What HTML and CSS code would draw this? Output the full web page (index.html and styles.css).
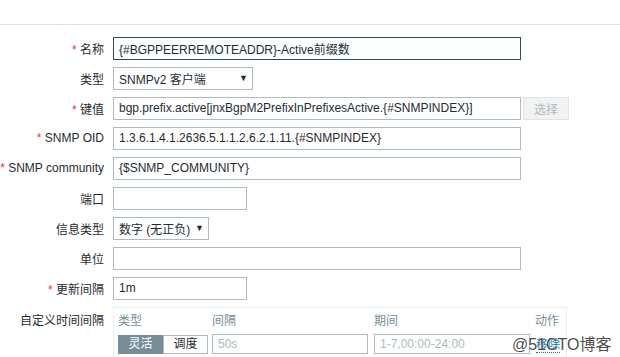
FILE: index.html
```html
<!DOCTYPE html>
<html lang="zh-CN">
<head>
  <meta charset="UTF-8" />
  <meta name="viewport" content="width=device-width, initial-scale=1.0"/>
  <title>监控项</title>
  <link rel="stylesheet" href="styles.css">
</head>
<body>
  <div class="page">
    <form class="form-list">
      <div class="row">
        <label class="lbl"><span class="req">*</span> 名称</label>
        <div class="field"><input type="text" class="inp wide focus" value="{#BGPPEERREMOTEADDR}-Active前缀数"></div>
      </div>
      <div class="row">
        <label class="lbl">类型</label>
        <div class="field"><div class="select sel-type">SNMPv2 客户端<span class="arrow">▼</span></div></div>
      </div>
      <div class="row">
        <label class="lbl"><span class="req">*</span> 键值</label>
        <div class="field">
          <input type="text" class="inp wide" value="bgp.prefix.active[jnxBgpM2PrefixInPrefixesActive.{#SNMPINDEX}]">
          <button type="button" class="btn-alt" disabled>选择</button>
        </div>
      </div>
      <div class="row">
        <label class="lbl"><span class="req">*</span> SNMP OID</label>
        <div class="field"><input type="text" class="inp wide" value="1.3.6.1.4.1.2636.5.1.1.2.6.2.1.11.{#SNMPINDEX}"></div>
      </div>
      <div class="row">
        <label class="lbl"><span class="req">*</span> SNMP community</label>
        <div class="field"><input type="text" class="inp wide" value="{$SNMP_COMMUNITY}"></div>
      </div>
      <div class="row">
        <label class="lbl">端口</label>
        <div class="field"><input type="text" class="inp short" value=""></div>
      </div>
      <div class="row">
        <label class="lbl">信息类型</label>
        <div class="field"><div class="select sel-info">数字 (无正负)<span class="arrow">▼</span></div></div>
      </div>
      <div class="row">
        <label class="lbl">单位</label>
        <div class="field"><input type="text" class="inp wide" value=""></div>
      </div>
      <div class="row">
        <label class="lbl"><span class="req">*</span> 更新间隔</label>
        <div class="field"><input type="text" class="inp short" value="1m"></div>
      </div>
      <div class="row row-top">
        <label class="lbl">自定义时间间隔</label>
        <div class="field">
          <div class="intervals">
            <div class="int-head">
              <span>类型</span>
              <span>间隔</span>
              <span>期间</span>
              <span class="act">动作</span>
            </div>
            <div class="int-row">
              <div class="seg">
                <span class="seg-btn on">灵活</span>
                <span class="seg-btn">调度</span>
              </div>
              <input type="text" class="inp mid" placeholder="50s">
              <input type="text" class="inp mid" placeholder="1-7,00:00-24:00">
              <a class="link" href="#">移除</a>
            </div>
          </div>
        </div>
      </div>
    </form>
    <div class="watermark">@51CTO博客</div>
  </div>
</body>
</html>
```

FILE: styles.css
```css
* {
  box-sizing: border-box;
}

body {
  margin: 0;
  background: #fff;
  color: #1f2c33;
  font-family: "Liberation Sans", Arial, "Noto Sans CJK SC", sans-serif;
  font-size: 12px;
  overflow: hidden;
}

.page {
  position: relative;
  height: 357px;
  padding-top: 24px;
}

.form-list {
  border-top: 1px solid #e3e3e3;
  padding-top: 8px;
  margin: 0;
}

.row {
  display: grid;
  grid-template-columns: 104px 1fr;
  column-gap: 9px;
  align-items: center;
  height: 30px;
}

.row-top {
  align-items: start;
  height: auto;
}

.row-top .lbl {
  padding-top: 8px;
}

.lbl {
  text-align: right;
  white-space: nowrap;
}

.req {
  color: #e33734;
}

.field {
  display: flex;
  align-items: center;
  gap: 2px;
}

.inp {
  height: 23px;
  border: 1px solid #acbbc2;
  background: #fff;
  color: #1f2c33;
  font: inherit;
  padding: 0 5px;
  outline: none;
}

.inp::placeholder {
  color: #acbbc2;
}

.focus {
  border-color: #2f4f5f;
  background: #fbfffd;
}

.wide {
  width: 408px;
}

.short {
  width: 134px;
}

.mid {
  width: 156px;
  height: 20px;
}

.select {
  display: flex;
  align-items: center;
  justify-content: space-between;
  height: 23px;
  border: 1px solid #acbbc2;
  padding: 0 4px 0 5px;
  background: #fff;
}

.sel-type {
  width: 140px;
}

.sel-info {
  width: 96px;
}

.arrow {
  font-size: 9px;
  color: #1f2c33;
}

.btn-alt {
  width: 46px;
  height: 23px;
  border: 1px solid #dfe4e7;
  background: #f2f2f2;
  color: #acbbc2;
  font: inherit;
}

.intervals {
  width: 454px;
  margin-top: 4px;
  border: 1px solid #ebeef0;
  border-bottom: none;
  padding: 4px 4px 6px 4px;
}

.int-head {
  display: grid;
  grid-template-columns: 94px 162px 1fr auto;
  color: #768d99;
  height: 22px;
  line-height: 18px;
}

.int-head .act {
  padding-right: 3px;
}

.int-row {
  display: flex;
  align-items: center;
  gap: 4px;
}

.int-row .mid + .mid {
  margin-left: 2px;
}

.seg {
  display: flex;
  width: 90px;
}

.seg-btn {
  width: 45px;
  height: 19px;
  line-height: 17px;
  text-align: center;
  border: 1px solid #acbbc2;
  background: #fff;
}

.seg-btn.on {
  background: #768d99;
  border-color: #768d99;
  color: #fff;
}

.link {
  margin-left: 2px;
  color: #0275b8;
  text-decoration: none;
  border-bottom: 1px dotted #0275b8;
}

.watermark {
  position: absolute;
  left: 512px;
  top: 331px;
  font-size: 16px;
  color: rgba(40, 40, 40, 0.85);
  text-shadow: 0 0 2px #fff;
  white-space: nowrap;
}
```
